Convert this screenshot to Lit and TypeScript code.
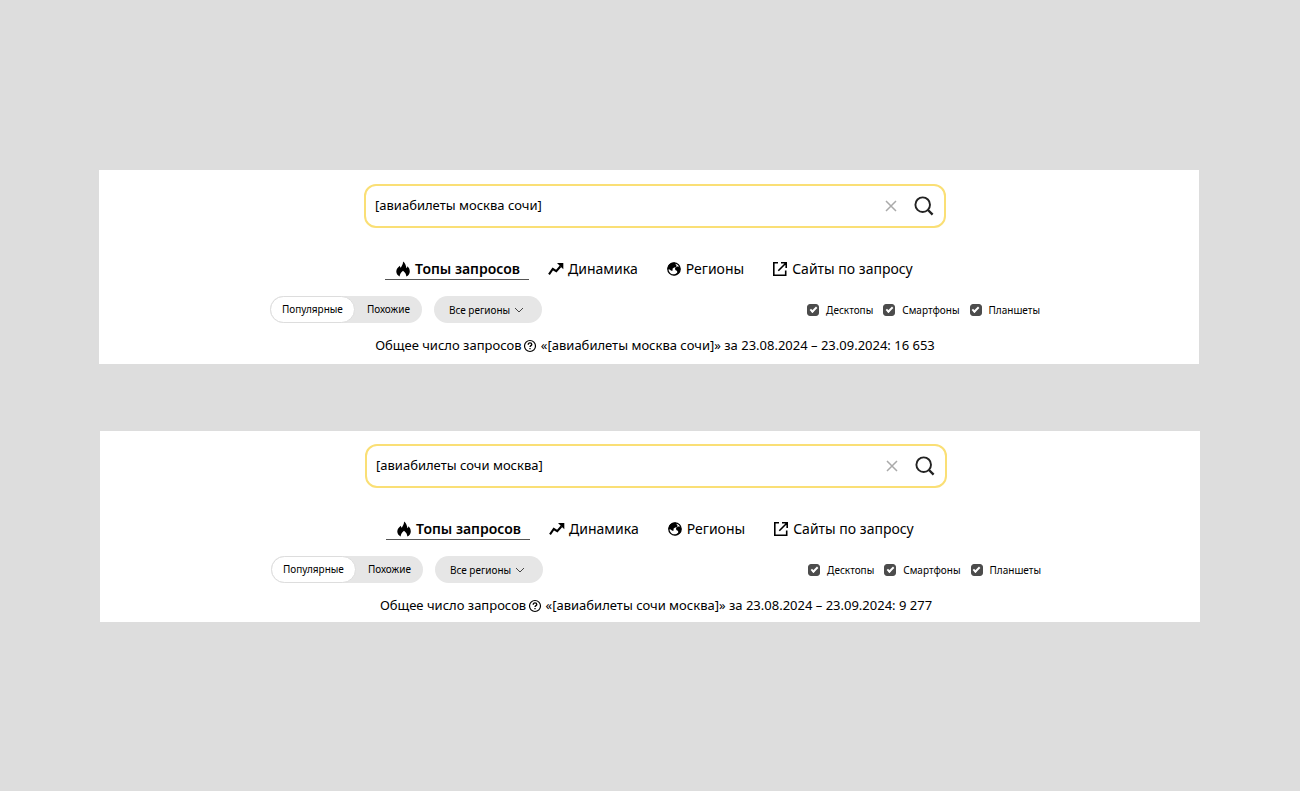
import { LitElement, html, css, svg } from "lit";
import { customElement, property } from "lit/decorators.js";

const flame = svg`<svg class="icon" viewBox="0 0 16 16" aria-hidden="true"><path fill="currentColor" d="M8 .5C8.300 3 6.800 4.500 5.800 6.700 5.200 6.300 5 5.600 4.900 4.700 3 6.200 1.300 8.100 1.300 10.500c0 2.300 1.300 4 3.400 5 .1-1.900.7-3.700 3.300-5.700 2.500 1.900 3.200 3.800 3.300 5.700 2.200-.9 3.500-2.800 3.500-5 0-2.400-1.200-4.100-2.400-5.200-.1.900-.4 1.500-1 1.900C11 4.500 10.300 2 8 .5Z"/></svg>`;

const trend = svg`<svg class="icon" viewBox="0 0 16 16" aria-hidden="true"><path fill="none" stroke="currentColor" stroke-width="2.100" d="M1 13.300 4.800 8 8.300 10.100 12.500 5.300"/><path fill="currentColor" d="M9 2h6.300v6.300Z"/></svg>`;

const globe = svg`<svg class="icon" viewBox="0 0 16 16" aria-hidden="true"><circle cx="8" cy="8" r="6.200" fill="none" stroke="currentColor" stroke-width="1.300"/><path fill="currentColor" d="M9 1.500C4.500.9 1.400 4.100 1.500 8.200l2.200.2 1.500 1.300 1.500-.3-.2-1.700 1.600-1.200 1.800-.2.800-1.400-1-1.300Zm4.500 4-2.300 0-2.200 1.600.3 1.900 1.800.9.100 1.900-2.500 1.700-3.100.3c3.700 1.600 7.900-.9 8.500-4.800.2-1.300 0-2.500-.6-3.500Z"/></svg>`;

const external = svg`<svg class="icon" viewBox="0 0 16 16" aria-hidden="true"><path fill="none" stroke="currentColor" stroke-width="1.600" d="M6 1.800H1.800v12.400h11.900V9.500M9 1.800h5.200V7M14 2 6.300 9.700"/></svg>`;

const cross = svg`<svg class="cross" viewBox="0 0 12 12" aria-hidden="true"><path fill="none" stroke="currentColor" stroke-width="1.500" d="m1 1 10 10M11 1 1 11"/></svg>`;

const lens = svg`<svg class="lens" viewBox="0 0 20 20" aria-hidden="true"><circle cx="8.700" cy="8.700" r="7.300" fill="none" stroke="currentColor" stroke-width="1.900"/><path fill="none" stroke="currentColor" stroke-width="2.400" d="m14 14 4.600 4.600"/></svg>`;

const chevron = svg`<svg class="chevron" viewBox="0 0 10 6" aria-hidden="true"><path fill="none" stroke="#444" stroke-width="1" d="m1 1 4 4 4-4"/></svg>`;

const help = svg`<svg class="help-icon" viewBox="0 0 14 14" aria-hidden="true"><circle cx="7" cy="7" r="5.500" fill="none" stroke="currentColor" stroke-width="1.200"/><path fill="none" stroke="currentColor" stroke-width="1.300" d="M5.200 5.700c0-1.200.8-1.900 1.800-1.900s1.800.7 1.800 1.600c0 1.200-1.800 1.300-1.800 2.600M7 9v1.300"/></svg>`;

@customElement("query-panel")
export class QueryPanel extends LitElement {
  @property() query = "";
  @property() total = "";

  static styles = css`
    :host {
      display: block;
      box-sizing: border-box;
      background: #fff;
      color: #000;
      padding: 14px 0 9px 12px;
      font: 13px/20px "Noto Sans", "Open Sans", sans-serif;
    }
    button,
    input,
    select {
      font: inherit;
      color: inherit;
      margin: 0;
    }
    button {
      border: 0;
      padding: 0;
      background: none;
      cursor: pointer;
    }
    .narrow {
      width: 100%;
      max-width: 582px;
      margin: 0 auto;
      box-sizing: border-box;
    }
    .search {
      display: flex;
      align-items: center;
      height: 44px;
      padding: 0 10px 0 9px;
      border: 2px solid #fadf75;
      border-radius: 12px;
    }
    .field {
      flex: 1;
      min-width: 0;
      border: 0;
      padding: 0 0 2px;
      outline: 0;
      background: none;
    }
    .clear,
    .find {
      display: flex;
    }
    .clear {
      color: #aaa;
      margin-right: 17px;
    }
    .cross {
      width: 12px;
      height: 12px;
    }
    .lens {
      width: 20px;
      height: 20px;
      color: #222;
    }
    .narrow.tabs {
      display: flex;
      margin-top: 31px;
      padding-left: 21px;
      font-size: 14px;
      gap: 9px;
    }
    .tab {
      display: flex;
      align-items: center;
      gap: 4px;
      height: 20px;
      padding: 0 9px 0 10px;
      color: inherit;
      text-decoration: none;
      white-space: nowrap;
      border-bottom: 1px solid transparent;
    }
    .current {
      font-weight: 600;
      border-color: #555;
    }
    .icon {
      width: 16px;
      height: 16px;
      flex: none;
    }
    .filters {
      display: flex;
      align-items: center;
      width: 100%;
      max-width: 770px;
      margin: 16px auto 0;
      font-size: 10px;
      gap: 12px;
    }
    .switch {
      display: flex;
      height: 27px;
      border-radius: 14px;
      background: #e6e6e6;
    }
    .option {
      padding: 0 12px 1px;
      border-radius: 14px;
    }
    .chosen {
      padding: 0 11px 1px;
      background: #fff;
      border: 1px solid #ddd;
    }
    .region {
      display: flex;
      position: relative;
      align-items: center;
      height: 27px;
      border-radius: 14px;
      background: #e6e6e6;
    }
    .regions {
      appearance: none;
      border: 0;
      background: none;
      height: 27px;
      padding: 0 31px 0 15px;
      border-radius: 14px;
    }
    .chevron {
      position: absolute;
      right: 18px;
      width: 10px;
      height: 6px;
      pointer-events: none;
    }
    .devices {
      display: flex;
      margin-left: auto;
      gap: 10px;
    }
    .device {
      display: flex;
      align-items: center;
      gap: 7px;
    }
    .box {
      appearance: none;
      width: 12px;
      height: 12px;
      border: 1px solid #4c4c4c;
      border-radius: 3px;
      display: grid;
      place-items: center;
    }
    .box:checked {
      background: #4c4c4c;
    }
    .box:checked::before {
      content: "";
      width: 7px;
      height: 4px;
      border: solid #fff;
      border-width: 0 0 2px 2px;
      box-sizing: border-box;
      transform: rotate(-45deg);
      margin-bottom: 2px;
    }
    .total {
      margin: 12px 0 0;
      text-align: center;
    }
    .help {
      vertical-align: -3px;
      height: 14px;
      margin-left: 2px;
    }
    .help-icon {
      display: block;
      width: 14px;
      height: 14px;
    }
  `;

  render() {
    const tabs = [
      [flame, "Топы запросов"],
      [trend, "Динамика"],
      [globe, "Регионы"],
      [external, "Сайты по запросу"],
    ];
    return html`
      <form class="search narrow" role="search">
        <input class="field" type="text" aria-label="Запрос" .value=${this.query} />
        <button class="clear" type="button" aria-label="Очистить">${cross}</button>
        <button class="find" type="button" aria-label="Найти">${lens}</button>
      </form>
      <nav class="tabs narrow">
        ${tabs.map(
          ([icon, label], i) =>
            html`<a class="tab ${i === 0 ? "current" : ""}" href="#">${icon}<span>${label}</span></a>`
        )}
      </nav>
      <div class="filters">
        <div class="switch">
          <button class="option chosen" type="button" aria-pressed="true">Популярные</button>
          <button class="option" type="button" aria-pressed="false">Похожие</button>
        </div>
        <div class="region">
          <select class="regions" aria-label="Регион">
            <option>Все регионы</option>
          </select>
          ${chevron}
        </div>
        <div class="devices">
          ${["Десктопы", "Смартфоны", "Планшеты"].map(
            (name) =>
              html`<label class="device"><input class="box" type="checkbox" checked />${name}</label>`
          )}
        </div>
      </div>
      <p class="total">
        Общее число запросов<button class="help" type="button" aria-label="Справка">${help}</button>
        «${this.query}» за 23.08.2024 – 23.09.2024: ${this.total}
      </p>
    `;
  }
}

@customElement("app-root")
export class AppRoot extends LitElement {
  static styles = css`
    :host {
      display: flex;
      flex-direction: column;
      justify-content: center;
      gap: 67px;
      box-sizing: border-box;
      min-height: 100vh;
      padding: 1px 100px 0 99px;
      background: #ddd;
    }
    .panel {
      width: 100%;
      max-width: 1100px;
    }
    .second {
      align-self: flex-end;
      padding-top: 13px;
      padding-bottom: 7px;
    }
  `;

  render() {
    return html`
      <query-panel class="panel" query="[авиабилеты москва сочи]" total="16 653"></query-panel>
      <query-panel class="panel second" query="[авиабилеты сочи москва]" total="9 277"></query-panel>
    `;
  }
}
